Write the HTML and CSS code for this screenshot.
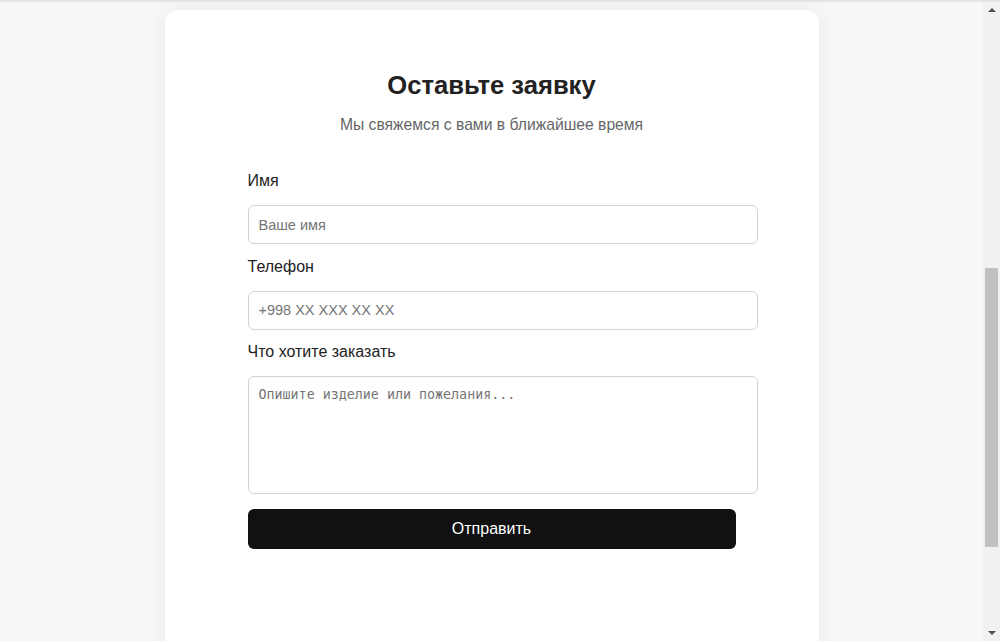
FILE: index.html
```html
<!DOCTYPE html>
<html lang="ru">
<head>
  <meta charset="UTF-8">
  <title>Оставьте заявку</title>
  <link rel="stylesheet" href="styles.css">
</head>
<body>
<div class="page">

  <div class="top-band"></div>

  <section class="order">
    <div class="order-card">
      <h2>Оставьте заявку</h2>
      <p class="order-sub">Мы свяжемся с вами в ближайшее время</p>

      <form class="order-form" onsubmit="return false">
        <label for="name">Имя</label>
        <input id="name" type="text" placeholder="Ваше имя">

        <label for="phone">Телефон</label>
        <input id="phone" type="tel" placeholder="+998 XX XXX XX XX">

        <label for="wish">Что хотите заказать</label>
        <textarea id="wish" placeholder="Опишите изделие или пожелания..."></textarea>

        <button type="submit">Отправить</button>
      </form>
    </div>
  </section>

</div>

<!-- window scrollbar -->
<div class="scrollbar">
  <i class="sb-arrow sb-up"></i>
  <i class="sb-thumb"></i>
  <i class="sb-arrow sb-down"></i>
</div>

<script>
  document.querySelector('.page').scrollTop = 579;
</script>
</body>
</html>
```

FILE: styles.css
```css
html, body {
  margin:0;
  padding:0;
  height:100%;
  overflow:hidden;
}

body {
  background:#f7f7f7;
  font-family:"Liberation Sans", Arial, sans-serif;
  color:#222;
}

.page {
  height:100vh;
  overflow-y:scroll;
  margin-right:17px;
}

.scrollbar {
  position:fixed;
  top:0;
  right:0;
  bottom:0;
  width:17px;
  background:#f1f1f1;
  border-top:2px solid #e4e4e4;
}
.sb-thumb {
  position:absolute;
  top:266px;
  left:2px;
  width:13px;
  height:279px;
  background:#c1c1c1;
}
.sb-arrow {
  position:absolute;
  left:5px;
  width:0;
  height:0;
  border-left:4px solid transparent;
  border-right:4px solid transparent;
}
.sb-up {
  top:6px;
  border-bottom:4px solid #505050;
}
.sb-down {
  bottom:6px;
  border-top:4px solid #505050;
}

.top-band {
  height:579px;
  border-bottom:2px solid #e4e4e4;
}

.order {
  padding:8px 20px 120px;
}

.order-card {
  width:654px;
  box-sizing:border-box;
  margin:0 auto;
  background:#fff;
  border-radius:12px;
  box-shadow:0 0 18px rgba(0,0,0,.06);
  padding:40px 83px 150px;
}

.order-card h2 {
  margin:21px 0 16px;
  font-size:25.6px;
  text-align:center;
  color:#222;
}

.order-sub {
  margin:0 0 38px;
  text-align:center;
  font-size:15.7px;
  color:#666;
}

.order-form label {
  display:block;
  font-size:16px;
  margin-bottom:15px;
  color:#222;
}

.order-form input,
.order-form textarea {
  display:block;
  width:100%;
  padding:10px;
  border:1px solid #d2d2d2;
  border-radius:6px;
  margin:0 0 13.5px;
  background:#fff;
  color:#222;
}

.order-form input {
  height:17px;
  font-family:"Liberation Sans", Arial, sans-serif;
  font-size:14.5px;
}

.order-form textarea {
  height:96px;
  resize:none;
  font-family:"DejaVu Sans Mono", monospace;
  font-size:13.33px;
  margin-bottom:15px;
}

::placeholder {
  color:#757575;
}

.order-form button {
  display:block;
  width:100%;
  height:40px;
  border:none;
  border-radius:6px;
  background:#111;
  color:#fff;
  font-family:"Liberation Sans", Arial, sans-serif;
  font-size:16px;
  cursor:pointer;
}
```
